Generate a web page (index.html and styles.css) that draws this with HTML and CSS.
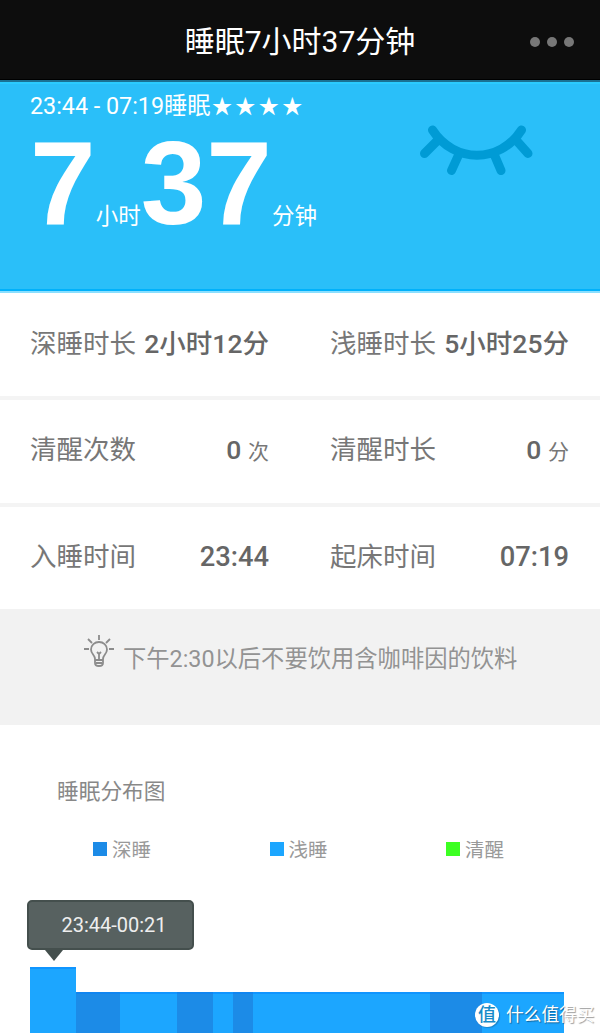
FILE: index.html
```html
<!doctype html>
<html lang="zh-CN">
<head>
    <meta charset="utf-8">
    <title>睡眠7小时37分钟</title>
    <link rel="stylesheet" href="styles.css">
</head>

<body>
<div class="page">
    <div class="header">
        <h1>睡眠7小时37分钟</h1>
        <div class="more"><i></i><i></i><i></i></div>
    </div>

    <div class="banner">
        <div class="total">
            <p class="range">23:44 - 07:19睡眠<span class="stars">★★★★</span></p>
            <p class="time"><b>7</b><span>小时</span><b>37</b><span>分钟</span></p>
        </div>
        <svg class="eye" width="118" height="54" viewBox="0 0 118 54">
            <path d="M14.500 8C36 41.500 82 41.500 103.500 8M20 18L6.500 31.500M41 32L33.500 48.500M76 32L83 48.500M98 18L110 31.500"/>
        </svg>
    </div>

    <ul class="list">
        <li>
            <div class="item"><span>深睡时长</span><b>2小时12分</b></div>
            <div class="item"><span>浅睡时长</span><b>5小时25分</b></div>
        </li>
        <li>
            <div class="item"><span>清醒次数</span><b>0 <em>次</em></b></div>
            <div class="item"><span>清醒时长</span><b>0 <em>分</em></b></div>
        </li>
        <li>
            <div class="item"><span>入睡时间</span><b class="clock">23:44</b></div>
            <div class="item"><span>起床时间</span><b class="clock">07:19</b></div>
        </li>
    </ul>

    <div class="tip">
        <svg class="bulb" width="32" height="34" viewBox="0 0 32 34">
            <path d="M12 25C12 21 8 20 8 15.500A8 7.500 0 0 1 24 15.500C24 20 20 21 20 25V29Q20 32 16 32Q12 32 12 29ZM16 1V6M5 5L9 9M27 5L23 9M1 15H6M26 15H31M14 18L16 20L18 18M16 20V25M12 26H20M13 29H19"/>
        </svg>
        <p>下午2:30以后不要饮用含咖啡因的饮料</p>
    </div>

    <div class="chart">
        <h2>睡眠分布图</h2>
        <div class="legend">
            <span><i class="deep"></i>深睡</span>
            <span><i class="light"></i>浅睡</span>
            <span><i class="awake"></i>清醒</span>
        </div>
        <div class="pop">23:44-00:21</div>
        <div class="bars">
            <i class="light on" style="width: 46px"></i>
            <i class="deep" style="width: 44px"></i>
            <i class="light" style="width: 57px"></i>
            <i class="deep" style="width: 36px"></i>
            <i class="light" style="width: 20px"></i>
            <i class="deep" style="width: 20px"></i>
            <i class="light" style="width: 177px"></i>
            <i class="deep" style="width: 52px"></i>
            <i class="light" style="width: 82px"></i>
        </div>
    </div>

    <div class="mark"><span class="logo">值</span>什么值得买</div>
</div>
</body>

</html>
```

FILE: styles.css
```css
body,
ul,
p,
h1,
h2 {
    margin: 0;
    padding: 0;
}

body {
    font-family: Roboto, "Noto Sans CJK SC", sans-serif;
    background: #fff;
}

li {
    list-style: none;
}

i,
em {
    font-style: normal;
}

.page {
    width: 600px;
    height: 1033px;
    position: relative;
    overflow: hidden;
}

/*顶部标题*/
.header {
    height: 80px;
    box-sizing: border-box;
    border-bottom: 1px solid #000;
    background: #0d0d0d;
    display: grid;
    grid-template-columns: 1fr auto 1fr;
    align-items: center;
}

.header h1 {
    grid-column: 2;
    padding-top: 4px;
    font-size: 30px;
    font-weight: 400;
    line-height: 44px;
    color: #fff;
}

.more {
    display: flex;
    justify-content: flex-end;
    gap: 7px;
    padding: 4px 26px 0 0;
}

.more i {
    width: 10px;
    height: 10px;
    border-radius: 50%;
    background: #777;
}

/*睡眠总时长*/
.banner {
    height: 213px;
    box-sizing: border-box;
    border-top: 2px solid #1a7194;
    border-bottom: 2px solid #8adfff;
    padding: 9px 64px 0 30px;
    background: #2abff9;
    box-shadow: inset 0 2px #2bcbff, inset 0 -2px #00b1fb;
    display: flex;
    justify-content: space-between;
    color: #fff;
}

.range {
    height: 30px;
    font-size: 23.300px;
    line-height: 30px;
    white-space: nowrap;
}

.stars {
    margin-left: 1px;
    font-size: 20.500px;
    letter-spacing: 3px;
}

.time {
    display: flex;
    align-items: baseline;
    line-height: 124px;
}

.time b {
    font-family: "Liberation Sans", sans-serif;
    font-size: 118px;
    line-height: 124px;
}

.time span {
    font-size: 22.500px;
    line-height: 30px;
}

.eye {
    margin-top: 31px;
}

.eye path {
    fill: none;
    stroke: #009bd5;
    stroke-width: 9;
    stroke-linecap: round;
}

/*数据列表*/
.list li {
    height: 107px;
    box-sizing: border-box;
    border-bottom: 4px solid #f4f4f4;
    padding: 0 31px 2px 30px;
    display: grid;
    grid-template-columns: 239px 239px;
    column-gap: 61px;
    align-items: center;
}

.list li:last-child {
    border-bottom: 0;
    height: 102px;
}

.item {
    display: flex;
    justify-content: space-between;
    align-items: baseline;
    white-space: nowrap;
    font-size: 26.500px;
    line-height: 40px;
    color: #777;
}

.item b {
    font-weight: 500;
    font-size: 26.500px;
    color: #666;
}

.item .clock {
    font-size: 27.300px;
}

.item em {
    font-size: 21px;
    font-weight: 400;
    color: #777;
}

/*提示*/
.tip {
    height: 116px;
    box-sizing: border-box;
    padding: 25px 0 0 83px;
    background: #f2f2f2;
    display: flex;
    gap: 8px;
    font-size: 23.300px;
    line-height: 50px;
    color: #939393;
}

.bulb path {
    fill: none;
    stroke: #8c8c8c;
    stroke-width: 1.800;
}

/*分布图*/
.chart {
    padding: 51px 30px 0;
}

.chart h2 {
    padding-left: 27px;
    font-size: 21.700px;
    font-weight: 400;
    line-height: 32px;
    color: #888;
}

.legend {
    display: flex;
    padding: 28px 0 0 63px;
    color: #999;
    font-size: 19.500px;
    line-height: 30px;
}

.legend span {
    width: 176.500px;
    flex: none;
    display: flex;
    align-items: center;
    gap: 5px;
}

.legend i {
    width: 14px;
    height: 14px;
    margin-bottom: 4px;
}

.deep {
    background: #1c8be7;
}

.light {
    background: #1ca6ff;
}

.awake {
    background: #3cff22;
}

.pop {
    width: 167px;
    height: 50px;
    box-sizing: border-box;
    border: 2px solid #444f4d;
    border-radius: 5px;
    margin: 34px 0 0 -3px;
    padding-left: 7px;
    background: #576160;
    position: relative;
    font-size: 20px;
    line-height: 47px;
    text-align: center;
    color: #eee;
}

.pop::after {
    content: "";
    position: absolute;
    left: 16px;
    top: 48px;
    border: 9px solid transparent;
    border-top: 11px solid #444f4d;
    border-bottom: 0;
}

.bars {
    height: 66px;
    margin-top: 17px;
    display: flex;
    align-items: flex-end;
}

.bars i {
    height: 41px;
    box-shadow: inset 0 2px rgba(0, 125, 255, .4);
}

.bars .on {
    height: 66px;
}

/*右下角水印*/
.mark {
    position: absolute;
    left: 475px;
    top: 1003px;
    display: flex;
    align-items: center;
    gap: 7px;
    white-space: nowrap;
    font-size: 17.700px;
    line-height: 24px;
    color: #fff;
    text-shadow: 1px 1px 1px rgba(0, 0, 0, .4);
}

.logo {
    width: 24px;
    height: 24px;
    border-radius: 50%;
    background: #fff;
    font-size: 18px;
    font-weight: 500;
    text-align: center;
    color: #168bc9;
    text-shadow: none;
    box-shadow: 1px 1px 1px rgba(0, 0, 0, .2);
}
```
